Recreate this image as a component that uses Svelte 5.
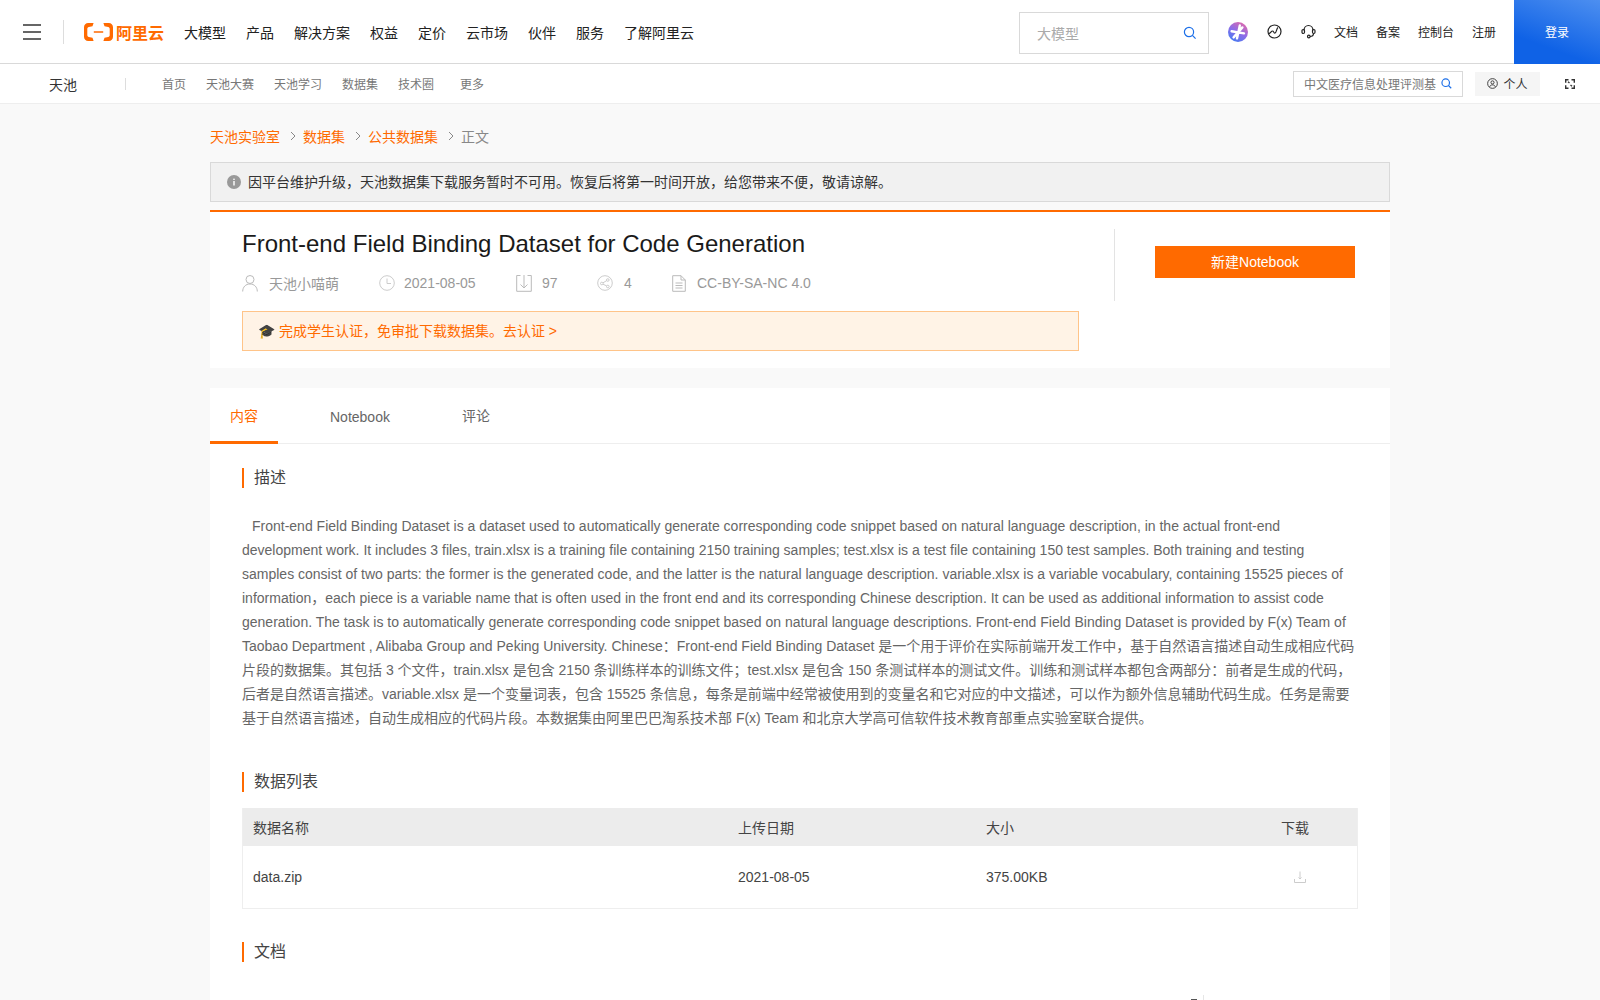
<script lang="ts">
  const mainNav = ['大模型', '产品', '解决方案', '权益', '定价', '云市场', '伙伴', '服务', '了解阿里云']
  const subNav = ['首页', '天池大赛', '天池学习', '数据集', '技术圈']
  const headerLinks = ['文档', '备案', '控制台', '注册']
  const tabs = ['内容', 'Notebook', '评论']
  const crumbs = ['天池实验室', '数据集', '公共数据集']

  const description = `Front-end Field Binding Dataset is a dataset used to automatically generate corresponding code snippet based on natural language description, in the actual front-end development work. It includes 3 files, train.xlsx is a training file containing 2150 training samples; test.xlsx is a test file containing 150 test samples. Both training and testing samples consist of two parts: the former is the generated code, and the latter is the natural language description. variable.xlsx is a variable vocabulary, containing 15525 pieces of information，each piece is a variable name that is often used in the front end and its corresponding Chinese description. It can be used as additional information to assist code generation. The task is to automatically generate corresponding code snippet based on natural language descriptions. Front-end Field Binding Dataset is provided by F(x) Team of Taobao Department , Alibaba Group and Peking University. Chinese：Front-end Field Binding Dataset 是一个用于评价在实际前端开发工作中，基于自然语言描述自动生成相应代码片段的数据集。其包括 3 个文件，train.xlsx 是包含 2150 条训练样本的训练文件；test.xlsx 是包含 150 条测试样本的测试文件。训练和测试样本都包含两部分：前者是生成的代码，后者是自然语言描述。variable.xlsx 是一个变量词表，包含 15525 条信息，每条是前端中经常被使用到的变量名和它对应的中文描述，可以作为额外信息辅助代码生成。任务是需要基于自然语言描述，自动生成相应的代码片段。本数据集由阿里巴巴淘系技术部 F(x) Team 和北京大学高可信软件技术教育部重点实验室联合提供。`
</script>

<header class="top">
  <div class="burger" aria-hidden="true"><span></span><span></span><span></span></div>
  <i class="top-sep"></i>
  <a class="logo" href="#top">
    <svg width="29" height="18" viewBox="0 0 29 18" aria-hidden="true">
      <path fill="#ff6a00" d="M9.6 0H4.2C1.8 0 0 1.8 0 4.2v9.6C0 16.200 1.800 18 4.200 18h5.400l-1.100-3.300-3.700-.8c-.9-.2-1.500-1-1.500-1.900V6c0-.9.600-1.700 1.500-1.900l3.700-.8zM19.400 0h5.400C27.200 0 29 1.800 29 4.200v9.600c0 2.400-1.800 4.200-4.200 4.200h-5.400l1.100-3.300 3.700-.8c.9-.2 1.500-1 1.500-1.900V6c0-.9-.6-1.700-1.500-1.900l-3.700-.8zM9.800 8.200h9.400v1.600H9.800z"/>
    </svg>
    <span>阿里云</span>
  </a>
  <nav class="main-nav">
    {#each mainNav as item}
      <a href="#top">{item}</a>
    {/each}
  </nav>
  <div class="top-search">
    <span>大模型</span>
    <svg width="14" height="14" viewBox="0 0 14 14" fill="none" stroke="#1c6fe8" stroke-width="1.200" aria-hidden="true"><circle cx="6" cy="6" r="4.600"/><path d="M9.400 9.400L12.600 12.600"/></svg>
  </div>
  <svg class="spark" width="20" height="20" viewBox="0 0 20 20" aria-hidden="true">
    <defs>
      <linearGradient id="spark-fill" x1="0.800" y1="0" x2="0.200" y2="1">
        <stop offset="0" stop-color="#e46aa8"/>
        <stop offset="0.500" stop-color="#8d6ce8"/>
        <stop offset="1" stop-color="#3f7cf2"/>
      </linearGradient>
    </defs>
    <circle cx="10" cy="10" r="10" fill="url(#spark-fill)"/>
    <path stroke="#fff" stroke-width="2.400" stroke-linecap="round" fill="none" d="M11.800 3.400L9 16.400M3.600 9.200L16 11.400M5.600 15.400L14.400 5.400"/>
  </svg>
  <svg class="globe" width="15" height="15" viewBox="0 0 15 15" fill="none" stroke="#222" stroke-width="1.200" aria-hidden="true">
    <circle cx="7.500" cy="7.500" r="6.500"/>
    <path d="M1.500 9.500c2 .5 2.500-2.500 4-2.500s1 2.500 2.500 2 1.500-4.500 3-5.500"/>
  </svg>
  <svg class="headset" width="15" height="15" viewBox="0 0 15 15" fill="none" stroke="#222" stroke-width="1.200" aria-hidden="true">
    <path d="M3 6.500C3 3.500 5 1.500 7.500 1.500S12 3.500 12 6.500"/>
    <rect x="1" y="5.500" width="2.500" height="4" rx="1.200"/>
    <rect x="11.500" y="5.500" width="2.500" height="4" rx="1.200"/>
    <path d="M12.500 9.500c0 2-1.500 3-3.500 3"/>
    <circle cx="7.800" cy="12.500" r="1.300"/>
  </svg>
  <div class="top-links">
    {#each headerLinks as link}
      <a href="#top">{link}</a>
    {/each}
  </div>
  <button type="button" class="login">登录</button>
</header>

<div class="sub">
  <span class="sub-brand">天池</span>
  <i class="sub-sep"></i>
  <nav class="sub-nav">
    {#each subNav as item}
      <a href="#top">{item}</a>
    {/each}
    <a class="more" href="#top">更多</a>
  </nav>
  <div class="sub-search">
    <span>中文医疗信息处理评测基</span>
    <svg width="11" height="11" viewBox="0 0 14 14" fill="none" stroke="#1c6fe8" stroke-width="1.500" aria-hidden="true"><circle cx="6" cy="6" r="4.800"/><path d="M9.500 9.500L13 13"/></svg>
  </div>
  <button type="button" class="personal">
    <svg width="11" height="11" viewBox="0 0 12 12" fill="none" stroke="#333" stroke-width="1" aria-hidden="true"><circle cx="6" cy="6" r="5.300"/><circle cx="6" cy="4.800" r="1.700"/><path d="M3 9.500c.6-1.500 1.700-2 3-2s2.400.5 3 2"/></svg>
    个人
  </button>
  <svg class="expand" width="10" height="10" viewBox="0 0 10 10" fill="none" stroke="#333" stroke-width="1.400" aria-hidden="true">
    <path d="M3.500 .7H.7v3M6.500 .7h2.800v3M.7 6.300v3h2.800M9.300 6.300v3H6.500M3 2.800L4.500 4M7 7.200L5.500 6"/>
  </svg>
</div>

<main class="page">
  <div class="crumbs">
    {#each crumbs as crumb}
      <a href="#top">{crumb}</a>
      <svg width="6" height="10" viewBox="0 0 6 10" fill="none" stroke="#888" stroke-width="1" aria-hidden="true"><path d="M1 1l4 4-4 4"/></svg>
    {/each}
    <span>正文</span>
  </div>

  <div class="alert">
    <svg width="14" height="14" viewBox="0 0 14 14" aria-hidden="true"><circle cx="7" cy="7" r="7" fill="#999"/><rect x="6.300" y="6" width="1.400" height="4.500" fill="#fff"/><rect x="6.300" y="3.600" width="1.400" height="1.400" fill="#fff"/></svg>
    因平台维护升级，天池数据集下载服务暂时不可用。恢复后将第一时间开放，给您带来不便，敬请谅解。
  </div>

  <section class="summary">
    <div class="summary-main">
      <h1>Front-end Field Binding Dataset for Code Generation</h1>
      <div class="meta">
        <span class="meta-item user">
          <svg width="16" height="18" viewBox="0 0 16 18" fill="none" stroke="#bbb" stroke-width="1" aria-hidden="true"><circle cx="8" cy="5.500" r="4"/><path d="M.7 17.500c0-4.500 3-7.500 7.300-7.500s7.300 3 7.300 7.500"/></svg>
          天池小喵萌
        </span>
        <span class="meta-item date">
          <svg width="16" height="16" viewBox="0 0 16 16" fill="none" stroke="#ccc" stroke-width="1" aria-hidden="true"><circle cx="8" cy="8" r="7.300"/><path d="M8 3.500V8.500H12"/></svg>
          2021-08-05
        </span>
        <span class="meta-item downloads">
          <svg width="16" height="18" viewBox="0 0 16 18" fill="none" stroke="#bbb" stroke-width="1" aria-hidden="true"><path d="M4.500 1.500H.7v15.800h14.600V1.500h-3.800M8 1v13M4.500 10.500L8 14l3.500-3.500"/></svg>
          97
        </span>
        <span class="meta-item shares">
          <svg width="16" height="16" viewBox="0 0 16 16" fill="none" stroke="#ccc" stroke-width="1" aria-hidden="true"><circle cx="8" cy="8" r="7.300"/><circle cx="4.800" cy="8.500" r="1.300"/><circle cx="10.800" cy="5" r="1.300"/><circle cx="10.800" cy="11.500" r="1.300"/><path d="M6 7.800L9.600 5.700M6 9.200L9.600 10.900"/></svg>
          4
        </span>
        <span class="meta-item license">
          <svg width="14" height="17" viewBox="0 0 14 17" fill="none" stroke="#bbb" stroke-width="1" aria-hidden="true"><path d="M.7.700H9l4.300 4.300v11.300H.700zM9 .7V5h4.300M3.500 8h7M3.500 10.500h7M3.500 13h7"/></svg>
          CC-BY-SA-NC 4.0
        </span>
      </div>
      <div class="notice">🎓 完成学生认证，免审批下载数据集。去认证 &gt;</div>
    </div>
    <div class="summary-side">
      <button type="button" class="notebook-btn">新建Notebook</button>
    </div>
  </section>

  <section class="content">
    <div class="tabs">
      {#each tabs as tab, i}
        <a href="#top" class:active={i === 0}>{tab}</a>
      {/each}
    </div>
    <div class="content-body">
      <h2>描述</h2>
      <p class="desc">{description}</p>

      <h2 class="list-title">数据列表</h2>
      <table>
        <thead>
          <tr>
            <th class="col-name">数据名称</th>
            <th class="col-date">上传日期</th>
            <th class="col-size">大小</th>
            <th>下载</th>
          </tr>
        </thead>
        <tbody>
          <tr>
            <td>data.zip</td>
            <td>2021-08-05</td>
            <td>375.00KB</td>
            <td>
              <svg class="dl" width="12" height="12" viewBox="0 0 12 12" fill="none" stroke="#ccc" stroke-width="1" aria-hidden="true"><path d="M.5 8v3.500h11V8M6 .5V8M4.500 6.500L6 8l1.500-1.500"/></svg>
            </td>
          </tr>
        </tbody>
      </table>

      <h2 class="doc-title">文档</h2>
      <i class="doc-mark"></i>
    </div>
  </section>
</main>

<style>
  :global(html),
  :global(body) {
    margin: 0;
    height: 1000px;
    overflow: hidden;
    background: #f9f9f9;
  }
  :global(body) {
    font-family: 'Liberation Sans', 'Noto Sans CJK SC', sans-serif;
    font-size: 14px;
    color: #333;
  }
  a {
    color: inherit;
    text-decoration: none;
  }
  button {
    font: inherit;
    border: 0;
    cursor: pointer;
  }

  .top {
    display: flex;
    align-items: center;
    height: 63px;
    background: #fff;
    border-bottom: 1px solid #d9d9d9;
    padding-left: 23px;
  }
  .burger {
    display: flex;
    flex-direction: column;
    justify-content: space-between;
    width: 18px;
    height: 16px;
  }
  .burger span {
    height: 2px;
    background: #666;
  }
  .top-sep {
    width: 1px;
    height: 24px;
    margin-left: 22px;
    background: #ddd;
  }
  .logo {
    display: flex;
    align-items: center;
    gap: 3px;
    margin-left: 20px;
    color: #ff6a00;
    font-size: 16px;
    font-weight: 700;
  }
  .main-nav {
    display: flex;
    gap: 20px;
    margin-left: 20px;
    color: #222;
  }
  .top-search {
    display: flex;
    align-items: center;
    justify-content: space-between;
    box-sizing: border-box;
    width: 190px;
    height: 42px;
    margin: 2px 0 0 auto;
    padding: 0 11px 0 17px;
    border: 1px solid #d9d9d9;
    color: #aaa;
  }
  .spark {
    margin-left: 19px;
  }
  .globe {
    margin-left: 19px;
  }
  .headset {
    margin-left: 19px;
  }
  .top-links {
    display: flex;
    gap: 18px;
    margin-left: 18px;
    font-size: 12px;
    color: #222;
  }
  .login {
    width: 86px;
    height: 64px;
    margin: 0 0 -1px 18px;
    padding: 0 0 2px;
    color: #fff;
    font-size: 12px;
    background: linear-gradient(20deg, #0f62e6 30%, #4d8ff0 100%);
  }

  .sub {
    display: flex;
    align-items: center;
    height: 39px;
    padding: 0 25px 0 49px;
    background: #fff;
    border-bottom: 1px solid #eee;
  }
  .sub-sep {
    width: 1px;
    height: 12px;
    margin-left: 48px;
    background: #ddd;
  }
  .sub-nav {
    display: flex;
    gap: 20px;
    margin-left: 36px;
    font-size: 12px;
    color: #777;
  }
  .more {
    margin-left: 6px;
  }
  .sub-search {
    display: flex;
    align-items: center;
    gap: 5px;
    box-sizing: border-box;
    width: 170px;
    height: 26px;
    margin-left: auto;
    padding-left: 10px;
    border: 1px solid #d9d9d9;
    font-size: 12px;
    color: #777;
  }
  .sub-search span {
    white-space: nowrap;
  }
  .sub-search svg {
    flex: none;
  }
  .personal {
    display: flex;
    align-items: center;
    justify-content: center;
    gap: 5px;
    width: 65px;
    height: 24px;
    margin-left: 12px;
    background: #f5f5f5;
    font-size: 12px;
    color: #333;
  }
  .expand {
    margin-left: 25px;
  }

  .page {
    width: 1180px;
    margin: 0 auto;
  }
  .crumbs {
    display: flex;
    align-items: center;
    gap: 7px;
    box-sizing: border-box;
    height: 58px;
    padding-top: 6px;
    color: #ff6a00;
  }
  .crumbs svg {
    margin-left: 3px;
  }
  .crumbs span {
    color: #888;
  }
  .alert {
    display: flex;
    align-items: center;
    gap: 7px;
    box-sizing: border-box;
    height: 40px;
    padding: 0 0 2px 16px;
    background: #f1f1f1;
    border: 1px solid #d9d9d9;
    color: #333;
  }
  .alert svg {
    margin-top: 2px;
  }
  .summary {
    display: flex;
    box-sizing: border-box;
    height: 158px;
    margin-top: 8px;
    padding-left: 32px;
    background: #fff;
    border-top: 2px solid #ff6a00;
  }
  .summary-main {
    flex: none;
    width: 837px;
  }
  h1 {
    margin: 17px 0 0;
    font-size: 24px;
    font-weight: 400;
    line-height: 30px;
    color: #1a1a1a;
  }
  .meta {
    display: flex;
    align-items: center;
    height: 20px;
    margin-top: 14px;
    color: #999;
  }
  .meta-item {
    display: flex;
    align-items: center;
    gap: 10px;
  }
  .user {
    width: 137px;
    gap: 11px;
  }
  .date {
    width: 137px;
    gap: 9px;
  }
  .downloads {
    width: 81px;
  }
  .shares {
    width: 75px;
    gap: 11px;
  }
  .license {
    gap: 11px;
  }
  .notice {
    display: flex;
    align-items: center;
    box-sizing: border-box;
    height: 40px;
    margin-top: 18px;
    padding: 0 0 2px 15px;
    background: #fff3e6;
    border: 1px solid #ffc489;
    color: #ff6a00;
    white-space: pre;
  }
  .summary-side {
    flex: none;
    display: flex;
    justify-content: center;
    box-sizing: border-box;
    width: 276px;
    height: 72px;
    margin: 17px 0 0 35px;
    padding: 17px 0 0 5px;
    border-left: 1px solid #e3e3e3;
  }
  .notebook-btn {
    width: 200px;
    height: 32px;
    padding: 0 0 2px;
    background: #ff6a00;
    color: #fff;
  }

  .content {
    position: relative;
    height: 612px;
    margin-top: 20px;
    background: #fff;
  }
  .tabs {
    display: flex;
    height: 56px;
    box-sizing: border-box;
    border-bottom: 1px solid #eee;
    color: #666;
  }
  .tabs a {
    display: flex;
    align-items: center;
    height: 56px;
    box-sizing: border-box;
    padding: 1px 20px 0;
    margin-right: 32px;
    border-bottom: 3px solid transparent;
  }
  .tabs a:nth-child(2) {
    padding-top: 4px;
  }
  .tabs a.active {
    color: #ff6a00;
    border-bottom-color: #ff6a00;
  }
  .content-body {
    padding: 24px 32px 0;
  }
  h2 {
    margin: 0;
    padding-left: 10px;
    border-left: 2px solid #ff6a00;
    font-size: 16px;
    font-weight: 400;
    line-height: 20px;
    color: #444;
  }
  .desc {
    margin: 26px 0 0;
    height: 216px;
    font-size: 14px;
    line-height: 24px;
    color: #666;
    text-indent: 10px;
  }
  .list-title {
    margin-top: 42px;
  }
  table {
    width: 1116px;
    margin-top: 16px;
    border-collapse: collapse;
    table-layout: fixed;
    color: #444;
    border: 1px solid #eee;
    border-top: 0;
  }
  th {
    height: 38px;
    padding: 0 0 0 10px;
    background: #ececec;
    font-weight: 400;
    text-align: left;
  }
  td {
    height: 62px;
    padding: 0 0 0 10px;
  }
  .col-name {
    width: 475px;
  }
  .col-date {
    width: 238px;
  }
  .col-size {
    width: 285px;
  }
  .dl {
    display: block;
    margin-left: 13px;
  }
  .doc-title {
    margin-top: 33px;
  }
  .doc-mark {
    position: absolute;
    left: 981px;
    top: 607px;
    width: 12px;
    height: 5px;
    border-right: 1px solid #e6e6e6;
    background: linear-gradient(#555, #555) left bottom / 6px 1px no-repeat;
  }
</style>
